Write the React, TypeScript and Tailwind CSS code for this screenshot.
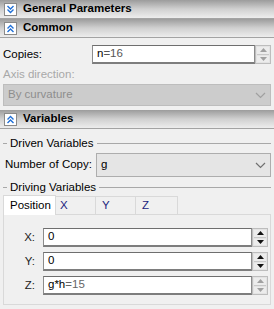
import React from "react";

// double chevron icon in a little box
function Toggle({ up }: { up?: boolean }) {
  return (
    <div className="w-[13px] h-[13px] bg-white border border-[#8a8a8a] flex items-center justify-center shrink-0">
      <svg width="9" height="9" viewBox="0 0 9 9" fill="none" stroke="#1f6fd6" strokeWidth="1.4">
        {up ? (
          <>
            <path d="M1.5 4.5 L4.5 1.5 L7.5 4.5" />
            <path d="M1.5 8 L4.5 5 L7.5 8" />
          </>
        ) : (
          <>
            <path d="M1.5 1 L4.5 4 L7.5 1" />
            <path d="M1.5 4.5 L4.5 7.5 L7.5 4.5" />
          </>
        )}
      </svg>
    </div>
  );
}

function Header({ title, up }: { title: string; up?: boolean }) {
  return (
    <div className="h-[19px] flex items-center gap-[6px] pl-[4px] bg-gradient-to-b from-[#9c9c9c] via-[#d0d0d0] to-[#ededed] border-b border-[#a3a3a3]">
      <Toggle up={up} />
      <span className="font-bold text-[11.5px] text-black leading-none">{title}</span>
    </div>
  );
}

function Spinner({ disabled }: { disabled?: boolean }) {
  const c = disabled ? "#a0a0a0" : "#111";
  return (
    <div className="w-[16px] self-stretch flex flex-col border border-[#bdbdbd] bg-[#e3e3e3] p-[1px] gap-[1px]">
      <div className="flex-1 flex items-center justify-center bg-[#ececec] border-b border-[#c8c8c8]">
        <svg width="7" height="4" viewBox="0 0 7 4"><path d="M0 4 L3.5 0 L7 4 Z" fill={c} /></svg>
      </div>
      <div className="flex-1 flex items-center justify-center bg-[#ececec]">
        <svg width="7" height="4" viewBox="0 0 7 4"><path d="M0 0 L3.5 4 L7 0 Z" fill={c} /></svg>
      </div>
    </div>
  );
}

function SpinInput({ value, disabled }: { value: React.ReactNode; disabled?: boolean }) {
  return (
    <div className="flex h-[19px]">
      <div className="flex-1 bg-white border border-[#8c8c8c] border-t-[#6e6e6e] border-b-2 border-b-[#7d7d7d] flex items-center px-[4px]">
        {value}
      </div>
      <Spinner disabled={disabled} />
    </div>
  );
}

function Chevron({ color }: { color: string }) {
  return (
    <svg width="11" height="7" viewBox="0 0 11 7" fill="none" stroke={color} strokeWidth="1.2">
      <path d="M1 1 L5.5 5.5 L10 1" />
    </svg>
  );
}

function GroupLabel({ text, className }: { text: string; className?: string }) {
  return (
    <div className={"flex items-center gap-[3px] leading-[14px] " + (className || "")}>
      <div className="w-[4px] h-px bg-[#a8a8a8]" />
      <span>{text}</span>
      <div className="flex-1 h-px bg-[#a8a8a8]" />
    </div>
  );
}

export default function App() {
  return (
    <div
      className="w-[274px] h-[309px] bg-[#f0f0f0] text-[11.5px] text-black overflow-hidden"
      style={{ fontFamily: '"Liberation Sans", Arial, sans-serif' }}
    >
      <Header title="General Parameters" />
      <Header title="Common" up />

      <div className="px-[3px] pt-[7px] pb-[4px]">
        <div className="flex items-center">
          <span className="w-[89px]">Copies:</span>
          <div className="flex-1">
            <SpinInput
              value={
                <span>
                  n<span className="text-[#555]">=16</span>
                </span>
              }
              disabled
            />
          </div>
        </div>
        <div className="text-[#a8a8a8] mt-[3px] leading-[14px]">Axis direction:</div>
        <div className="mt-[3px] h-[22px] bg-[#cccccc] border border-[#bdbdbd] flex items-center justify-between px-[4px] text-[#8e8e8e]">
          <span>By curvature</span>
          <Chevron color="#a0a0a0" />
        </div>
      </div>

      <Header title="Variables" up />

      <div className="px-[3px] pt-[7px]">
        <GroupLabel text="Driven Variables" />
        <div className="flex items-center mt-[3px]">
          <span className="w-[93px] pl-[2px]">Number of Copy:</span>
          <div className="flex-1 h-[24px] bg-[#e5e5e5] border border-[#adadad] flex items-center justify-between px-[4px]">
            <span>g</span>
            <Chevron color="#707070" />
          </div>
        </div>
        <GroupLabel text="Driving Variables" className="mt-[3px]" />

        <div>
          <div className="flex items-end h-[20px]">
            <div className="w-[53px] h-[20px] bg-white border border-[#d9d9d9] border-b-0 flex items-center pl-[6px] relative z-10 top-px">
              Position
            </div>
            <div className="w-[40px] h-[18px] border border-[#d9d9d9] border-l-0 border-b-0 flex items-center pl-[4px] text-[#1a237e]">
              X
            </div>
            <div className="w-[40px] h-[18px] border border-[#d9d9d9] border-l-0 border-b-0 flex items-center pl-[6px] text-[#1a237e]">
              Y
            </div>
            <div className="w-[42px] h-[18px] border border-[#d9d9d9] border-l-0 border-b-0 flex items-center pl-[6px] text-[#1a237e]">
              Z
            </div>
          </div>
          <div className="h-[91px] border border-[#d9d9d9] bg-[#f0f0f0] pl-[6px] pr-[2px] pt-[13px] flex flex-col gap-[5px]">
            {[
              { l: "X:", v: <span>0</span> },
              { l: "Y:", v: <span>0</span> },
              {
                l: "Z:",
                v: (
                  <span>
                    g*h<span className="text-[#666]">=15</span>
                  </span>
                ),
                d: true,
              },
            ].map((r) => (
              <div key={r.l} className="flex items-center">
                <span className="w-[33px] text-right pr-[8px] text-[#222]">{r.l}</span>
                <div className="flex-1">
                  <SpinInput value={r.v} disabled={r.d} />
                </div>
              </div>
            ))}
          </div>
        </div>
      </div>
    </div>
  );
}
